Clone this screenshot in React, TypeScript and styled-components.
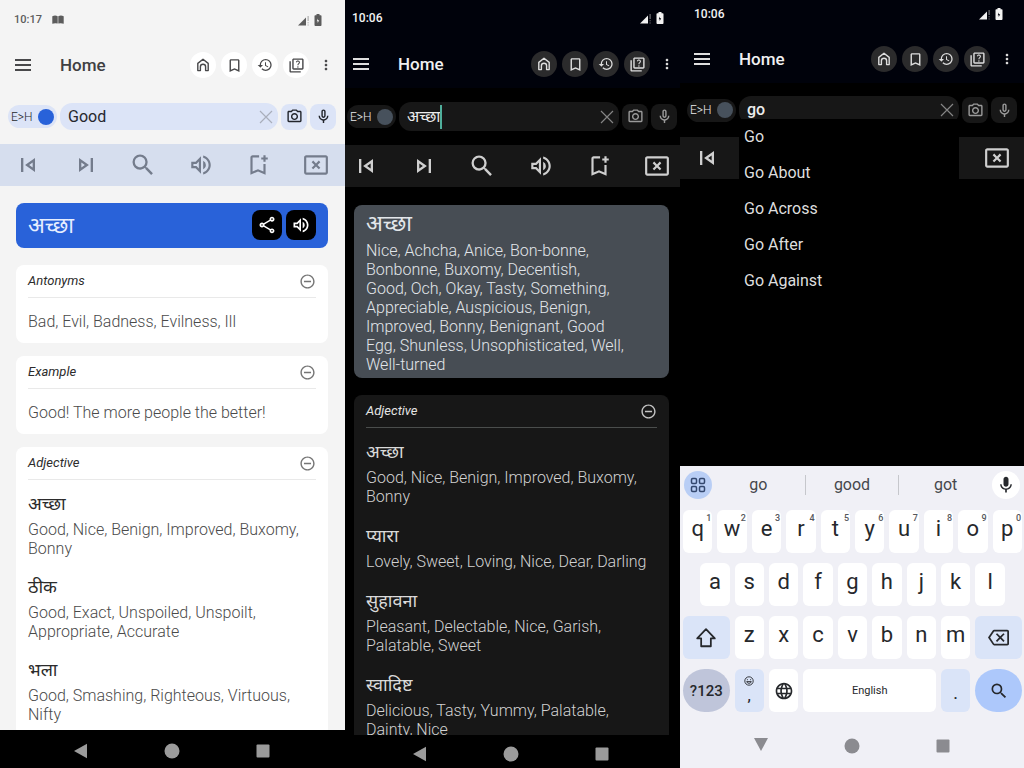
import React, { useState } from 'react';
import styled, { createGlobalStyle, ThemeProvider, css } from 'styled-components';
import {
  MdBookmarkBorder,
  MdHistory,
  MdLanguage,
  MdMic,
  MdMoreVert,
  MdOutlineBackspace,
  MdOutlineBookmarkAdd,
  MdOutlineCancelPresentation,
  MdOutlineMicNone,
  MdOutlinePhotoCamera,
  MdOutlineQuiz,
  MdOutlineShare,
  MdOutlineSkipNext,
  MdOutlineSkipPrevious,
  MdOutlineVolumeUp,
  MdRemoveCircleOutline,
  MdSearch,
} from 'react-icons/md';

type Insets = {
  statusTop: number;
  statusHeight: number;
  statusLeft: number;
  statusRight: number;
  statusSize: number;
  barLeft: number;
  barRight: number;
  searchHeight: number;
  searchLeft: number;
  searchRight: number;
  fieldHeight: number;
  toolLeft: number;
  toolRight: number;
  bodyTop: number;
  bodyLeft: number;
  bodyRight: number;
  entryGap: number;
};

type Palette = {
  page: string;
  bar: string;
  status: string;
  ink: string;
  icon: string;
  chip: string;
  field: string;
  fieldInk: string;
  clear: string;
  knob: string;
  fieldIcon: string;
  tools: string;
  toolIcon: string;
  card: string;
  heading: string;
  word: string;
  text: string;
  rule: string;
  minus: string;
  hero: string;
  heroInk: string;
};

const light: Palette = {
  page: '#f4f4f4',
  bar: '#f4f4f4',
  status: '#5c5c5c',
  ink: '#3f3f42',
  icon: '#48484a',
  chip: '#ffffff',
  field: '#dce4f7',
  fieldInk: '#26282e',
  clear: '#a9aebb',
  knob: '#2862d9',
  fieldIcon: '#22252c',
  tools: '#d6deee',
  toolIcon: '#747c8c',
  card: '#ffffff',
  heading: '#2c2c2c',
  word: '#2b2b2b',
  text: '#4a4a4a',
  rule: '#e9e9e9',
  minus: '#757575',
  hero: '#2962d9',
  heroInk: '#e6eeff',
};

const dark: Palette = {
  page: '#000000',
  bar: '#00020b',
  status: '#f2f2f2',
  ink: '#f0f0f0',
  icon: '#dedede',
  chip: '#2b2b2c',
  field: '#171717',
  fieldInk: '#ececec',
  clear: '#858585',
  knob: '#47515c',
  fieldIcon: '#9a9a9a',
  tools: '#171717',
  toolIcon: '#cfcfcf',
  card: '#171717',
  heading: '#e4e4e4',
  word: '#dadada',
  text: '#d2d2d2',
  rule: '#4a4d4c',
  minus: '#c4c4c4',
  hero: '#474d54',
  heroInk: '#e2e6ea',
};

const lightInsets: Insets = {
  statusTop: 12, statusHeight: 41, statusLeft: 14, statusRight: 23, statusSize: 11,
  barLeft: 13, barRight: 11,
  searchHeight: 55, searchLeft: 8, searchRight: 9, fieldHeight: 27,
  toolLeft: 14, toolRight: 15,
  bodyTop: 17, bodyLeft: 16, bodyRight: 17, entryGap: 16,
};

const darkInsets: Insets = {
  statusTop: 10, statusHeight: 40, statusLeft: 7, statusRight: 16, statusSize: 12,
  barLeft: 6, barRight: 5,
  searchHeight: 57, searchLeft: 2, searchRight: 3, fieldHeight: 29,
  toolLeft: 7, toolRight: 9,
  bodyTop: 18, bodyLeft: 9, bodyRight: 11, entryGap: 17,
};

const typingInsets: Insets = {
  statusTop: 6, statusHeight: 35, statusLeft: 14, statusRight: 21, statusSize: 12,
  barLeft: 12, barRight: 9,
  searchHeight: 54, searchLeft: 7, searchRight: 7, fieldHeight: 28,
  toolLeft: 13, toolRight: 13,
  bodyTop: 18, bodyLeft: 9, bodyRight: 11, entryGap: 17,
};

type PhoneTheme = { c: Palette; s: Insets };
type T = { theme: PhoneTheme };
const c = (key: keyof Palette) => (p: any) => (p as T).theme.c[key];
const s = (key: keyof Insets) => (p: any) => `${(p as T).theme.s[key]}px`;

const GlobalStyle = createGlobalStyle`
  * { box-sizing: border-box; }
  body {
    margin: 0;
    background: #000;
    font-family: Roboto, 'Noto Sans Devanagari', 'Noto Sans', sans-serif;
  }
  button, input { font: inherit; color: inherit; }
  h1, h2, h3, p, ul { margin: 0; padding: 0; }
  svg { display: block; }
`;

const Showcase = styled.main`
  display: grid;
  grid-template-columns: 345fr 335fr 344fr;
  height: 100vh;
`;

const Phone = styled.section`
  display: flex;
  flex-direction: column;
  min-width: 0;
  height: 100vh;
  background: ${c('page')};
`;

const StatusBar = styled.div`
  display: flex;
  align-items: flex-start;
  gap: 10px;
  flex: none;
  height: ${s('statusHeight')};
  padding: ${s('statusTop')} ${s('statusRight')} 0 ${s('statusLeft')};
  background: ${c('bar')};
  color: ${c('status')};
  font-size: ${s('statusSize')};
  font-weight: 500;
  line-height: 16px;
`;

const StatusIcons = styled.span`
  display: flex;
  align-items: center;
  gap: 4px;
  height: 16px;
  margin-left: auto;
`;

const StatusBook = styled.span`
  display: flex;
  align-items: center;
  height: 16px;
`;

const IconButton = styled.button`
  display: flex;
  align-items: center;
  justify-content: center;
  flex: none;
  padding: 0;
  border: 0;
  background: none;
  cursor: pointer;
`;

const AppBar = styled.header`
  display: flex;
  align-items: center;
  flex: none;
  height: 48px;
  padding: 0 ${s('barRight')} 0 ${s('barLeft')};
  background: ${c('bar')};
  color: ${c('icon')};
`;

const Title = styled.h1`
  margin-left: 27px;
  color: ${c('ink')};
  font-size: 17px;
  font-weight: 500;
  line-height: 24px;
`;

const Shortcuts = styled.nav`
  display: flex;
  gap: 5px;
  margin: 0 9px 0 auto;
`;

const Chip = styled(IconButton)`
  width: 26px;
  height: 26px;
  border-radius: 50%;
  background: ${c('chip')};
`;

const MoreButton = styled(IconButton)`
  width: 16px;
`;

const SearchBar = styled.form`
  display: flex;
  align-items: center;
  flex: none;
  gap: 3px;
  height: ${s('searchHeight')};
  padding: 0 ${s('searchRight')} 0 ${s('searchLeft')};
`;

const Direction = styled.label`
  display: flex;
  align-items: center;
  justify-content: space-between;
  flex: none;
  width: 49px;
  height: 23px;
  padding: 0 3px;
  border-radius: 12px;
  background: ${c('field')};
  color: ${c('fieldInk')};
  font-size: 12px;
  font-weight: 300;
`;

const Knob = styled.input`
  appearance: none;
  width: 16px;
  height: 16px;
  margin: 0;
  border-radius: 50%;
  background: ${c('knob')};
`;

const Field = styled.div`
  position: relative;
  display: flex;
  align-items: center;
  flex: 1;
  min-width: 0;
  height: ${s('fieldHeight')};
  padding: 0 3px 0 8px;
  border-radius: 12px;
  background: ${c('field')};
  color: ${c('fieldInk')};
`;

const Query = styled.input<{ $strong?: boolean }>`
  min-width: 8px;
  max-width: 170px;
  height: 24px;
  padding: 0;
  border: 0;
  outline: 0;
  background: none;
  font-size: 16px;
  font-weight: ${(p) => (p.$strong ? 500 : 400)};
  line-height: 24px;
  field-sizing: content;
`;

const Caret = styled.span`
  width: 2px;
  height: 24px;
  background: #4fae9b;
`;

const ClearButton = styled(IconButton)`
  width: 18px;
  height: 24px;
  margin-left: auto;
  color: ${c('clear')};
`;

const FieldButton = styled(IconButton)`
  width: 26px;
  height: 26px;
  border-radius: 8px;
  background: ${c('field')};
  color: ${c('fieldIcon')};
`;

const Suggestions = styled.ul`
  position: absolute;
  top: 23px;
  left: 0;
  right: 0;
  z-index: 2;
  list-style: none;
  background: #000;
`;

const Suggestion = styled.button`
  display: block;
  width: 100%;
  height: 36px;
  padding: 0 5px;
  border: 0;
  background: none;
  color: #dedede;
  font-size: 16px;
  line-height: 36px;
  text-align: left;
`;

const Tools = styled.div`
  display: flex;
  align-items: center;
  justify-content: space-between;
  flex: none;
  height: 42px;
  padding: 0 ${s('toolRight')} 0 ${s('toolLeft')};
  background: ${c('tools')};
  color: ${c('toolIcon')};
`;

const Tool = styled(IconButton)`
  width: 28px;
  height: 28px;
`;

const Results = styled.div`
  display: flex;
  flex-direction: column;
  flex: 1;
  gap: 13px;
  min-height: 0;
  padding: ${s('bodyTop')} ${s('bodyRight')} 0 ${s('bodyLeft')};
  overflow-y: auto;
  scrollbar-width: none;
`;

const Hero = styled.article`
  flex: none;
  margin-bottom: 4px;
  padding: 4px 12px;
  border-radius: 8px;
  background: ${c('hero')};
  color: ${c('heroInk')};
`;

const HeroRow = styled.div`
  display: flex;
  align-items: center;
  gap: 4px;
  min-height: 30px;
`;

const HeroWord = styled.h2`
  flex: 1;
  font-size: 22px;
  font-weight: 400;
  line-height: 30px;
`;

const HeroAction = styled(IconButton)`
  width: 30px;
  height: 30px;
  margin: 3px 0 4px;
  border-radius: 8px;
  background: #000;
  color: #fff;
`;

const Meanings = styled.p`
  color: ${c('text')};
  font-size: 16px;
  font-weight: 300;
  line-height: 19px;
`;

const HeroMeanings = styled(Meanings)`
  padding: 2px 24px 0 0;
  color: ${c('heroInk')};
`;

const Card = styled.article`
  flex: none;
  padding: 0 12px 12px;
  border-radius: 8px;
  background: ${c('card')};
`;

const CardHead = styled.header`
  display: flex;
  align-items: center;
  justify-content: space-between;
  height: 33px;
  border-bottom: 1px solid ${c('rule')};
  color: ${c('minus')};
`;

const CardTitle = styled.h2`
  color: ${c('heading')};
  font-size: 13px;
  font-style: italic;
  font-weight: 400;
  line-height: 20px;
`;

const Note = styled(Meanings)`
  padding-top: 14px;
`;

const Entries = styled.div`
  display: flex;
  flex-direction: column;
  gap: ${s('entryGap')};
  padding-top: 11px;
`;

const Word = styled.h3`
  margin-bottom: 3px;
  color: ${c('word')};
  font-size: 18px;
  font-weight: 400;
  line-height: 26px;
`;

const NavBar = styled.nav<{ $height: number; $offset: number; $pale?: boolean }>`
  display: flex;
  align-items: center;
  gap: 75px;
  flex: none;
  height: ${(p) => p.$height}px;
  padding: ${(p) => (p.$pale ? 12 : 4)}px 0 0 ${(p) => p.$offset}px;
  background: ${(p) => (p.$pale ? 'transparent' : '#000')};
  color: ${(p) => (p.$pale ? '#8b8b90' : '#9b9b9b')};
`;

const Keyboard = styled.div`
  margin-top: auto;
  background: #f0f0f6;
  color: #26282c;
`;

const Predictions = styled.div`
  display: flex;
  align-items: center;
  height: 38px;
  padding: 0 4px;
`;

const RoundKey = styled(IconButton)<{ $tint: string }>`
  width: 28px;
  height: 28px;
  border-radius: 50%;
  background: ${(p) => p.$tint};
`;

const Prediction = styled.button`
  flex: 1;
  height: 20px;
  padding: 0;
  border: 0;
  background: none;
  font-size: 16px;
  line-height: 20px;
  color: #45474c;

  & + & {
    border-left: 1px solid #c6c7cc;
  }
`;

const Words = styled.div`
  display: flex;
  flex: 1;
`;

const Keys = styled.div`
  display: grid;
  grid-template-columns: repeat(20, 1fr);
  grid-auto-rows: 43px;
  row-gap: 10px;
  padding-top: 6px;
`;

const tones = {
  plain: '#ffffff',
  soft: '#dae4f8',
  grey: '#bfc5da',
  blue: '#adc8fb',
};

const Key = styled.button<{
  $span?: number;
  $start?: number;
  $tone?: keyof typeof tones;
  $round?: boolean;
  $small?: boolean;
  $low?: boolean;
}>`
  position: relative;
  display: flex;
  flex-direction: column;
  align-items: center;
  justify-content: ${(p) => (p.$low ? 'flex-end' : 'center')};
  grid-column: ${(p) => p.$start ?? 'auto'} / span ${(p) => p.$span ?? 2};
  margin: 0 2px 0 3px;
  padding: 0;
  border: 0;
  border-radius: ${(p) => (p.$round ? '22px' : '6px')};
  background: ${(p) => tones[p.$tone ?? 'plain']};
  font-size: 22px;
  line-height: 26px;
  ${(p) =>
    p.$small &&
    css`
      font-size: 11px;
      line-height: 14px;
    `}
`;

const LetterKey = styled(Key)`
  padding-bottom: 6px;
`;

const KeyText = styled.span`
  font-size: 15px;
  font-weight: 500;
  line-height: 20px;
`;

const Digit = styled.sup`
  position: absolute;
  top: 2px;
  right: 1px;
  color: #55575c;
  font-size: 9px;
  font-weight: 500;
  line-height: 12px;
`;

const MenuIcon = () => (
  <svg width="20" height="20" viewBox="0 0 20 20" stroke="currentColor" strokeWidth="2" aria-hidden="true">
    <path d="M2 5h16M2 10h16M2 15h16" />
  </svg>
);

const HomeIcon = () => (
  <svg width="16" height="16" viewBox="0 0 16 16" fill="none" stroke="currentColor" strokeWidth="1.4" strokeLinejoin="round" aria-hidden="true">
    <path d="M2.8 13.6V6.4L8 2.2l5.2 4.2v7.2h-2.6V9.8a2.6 2.6 0 0 0-5.2 0v3.8z" />
  </svg>
);

const CloseIcon = () => (
  <svg width="14" height="14" viewBox="0 0 14 14" stroke="currentColor" strokeWidth="1.2" aria-hidden="true">
    <path d="M1 1l12 12M13 1L1 13" />
  </svg>
);

const SignalIcon = () => (
  <svg width="12" height="12" viewBox="0 0 12 12" fill="currentColor" aria-hidden="true">
    <path d="M0 11.5L8 3.5v8z" />
    <path d="M9.6 2h1v5h-1zM9.6 8.2h1v1h-1zM9.6 10.4h1v1h-1z" opacity=".55" />
  </svg>
);

const BatteryIcon = () => (
  <svg width="8" height="12" viewBox="0 0 8 12" aria-hidden="true">
    <path fill="currentColor" fillRule="evenodd" d="M2.5 0h3v1.2h1.2c.6 0 .8.3.8.8v9c0 .6-.3 1-.8 1H1.3c-.5 0-.8-.4-.8-1V2c0-.5.2-.8.8-.8h1.2zM4 4.4L2.700 7.200h1v1.800l1.500-2.800H4z" />
  </svg>
);

const BookIcon = () => (
  <svg width="12" height="10" viewBox="0 0 12 10" fill="currentColor" aria-hidden="true">
    <path d="M.3 1.2Q3.2 0 5.7 1.2V8.6Q3 7.6.3 8.8zM6.300 1.2Q8.8 0 11.7 1.2V8.8Q9 7.6 6.300 8.6z" />
  </svg>
);

const ShiftIcon = () => (
  <svg width="22" height="22" viewBox="0 0 20 20" fill="none" stroke="currentColor" strokeWidth="1.6" strokeLinejoin="round" aria-hidden="true">
    <path d="M10 2L2 10.4h3.6v7.1h8.8v-7.1H18z" />
  </svg>
);

const GridIcon = () => (
  <svg width="16" height="16" viewBox="0 0 16 16" fill="none" stroke="#34486f" strokeWidth="1.5" aria-hidden="true">
    <rect x="1.5" y="1.5" width="5" height="5" rx="1.2" />
    <rect x="9.5" y="1.5" width="5" height="5" rx="1.2" />
    <rect x="1.5" y="9.5" width="5" height="5" rx="1.2" />
    <rect x="9.5" y="9.5" width="5" height="5" rx="1.2" />
  </svg>
);

const SmileIcon = () => (
  <svg width="10" height="10" viewBox="0 0 10 10" fill="none" stroke="currentColor" strokeWidth="0.9" aria-hidden="true">
    <circle cx="5" cy="5" r="4.2" />
    <path d="M2.7 5.6a2.4 2.4 0 0 0 4.6 0zM3.4 3.2v1M6.6 3.2v1" />
  </svg>
);

const BackIcon = ({ down }: { down?: boolean }) => (
  <svg width="16" height="16" viewBox="0 0 16 16" fill="currentColor" aria-hidden="true">
    {down ? <path d="M1 0h14L8 13z" /> : <path d="M14 .8v14.400L1 8z" />}
  </svg>
);

const CircleIcon = () => (
  <svg width="16" height="16" viewBox="0 0 16 16" fill="currentColor" aria-hidden="true">
    <circle cx="8" cy="8" r="7.5" />
  </svg>
);

const SquareIcon = () => (
  <svg width="16" height="16" viewBox="0 0 16 16" fill="currentColor" aria-hidden="true">
    <rect x="1.5" y="1.5" width="13" height="13" rx="1" />
  </svg>
);

const SystemNav = ({ height, offset, pale }: { height: number; offset: number; pale?: boolean }) => (
  <NavBar $height={height} $offset={offset} $pale={pale} aria-label="System">
    <IconButton aria-label="Back"><BackIcon down={pale} /></IconButton>
    <IconButton aria-label="Home screen"><CircleIcon /></IconButton>
    <IconButton aria-label="Recent apps"><SquareIcon /></IconButton>
  </NavBar>
);

type TopProps = { time: string; book?: boolean; query: string; caret?: boolean; suggestions?: string[] };

const Top = ({ time, book, query, caret, suggestions }: TopProps) => {
  const [text, setText] = useState(query);
  return (
    <>
      <StatusBar>
        <span>{time}</span>
        {book && <StatusBook><BookIcon /></StatusBook>}
        <StatusIcons><SignalIcon /><BatteryIcon /></StatusIcons>
      </StatusBar>
      <AppBar>
        <IconButton aria-label="Menu"><MenuIcon /></IconButton>
        <Title>Home</Title>
        <Shortcuts aria-label="Shortcuts">
          <Chip aria-label="Home"><HomeIcon /></Chip>
          <Chip aria-label="Bookmarks"><MdBookmarkBorder size={17} /></Chip>
          <Chip aria-label="History"><MdHistory size={16} /></Chip>
          <Chip aria-label="Quiz"><MdOutlineQuiz size={17} /></Chip>
        </Shortcuts>
        <MoreButton aria-label="More"><MdMoreVert size={22} /></MoreButton>
      </AppBar>
      <SearchBar onSubmit={(e) => e.preventDefault()}>
        <Direction>
          E&gt;H
          <Knob type="checkbox" defaultChecked />
        </Direction>
        <Field>
          <Query aria-label="Search word" $strong={!!suggestions} value={text} onChange={(e) => setText(e.target.value)} />
          {caret && <Caret />}
          <ClearButton type="button" aria-label="Clear" onClick={() => setText('')}><CloseIcon /></ClearButton>
          {suggestions && (
            <Suggestions>
              {suggestions.map((item) => (
                <li key={item}>
                  <Suggestion type="button" onClick={() => setText(item)}>{item}</Suggestion>
                </li>
              ))}
            </Suggestions>
          )}
        </Field>
        <FieldButton type="button" aria-label="Camera"><MdOutlinePhotoCamera size={17} /></FieldButton>
        <FieldButton type="button" aria-label="Voice"><MdOutlineMicNone size={17} /></FieldButton>
      </SearchBar>
      <Tools role="toolbar">
        <Tool aria-label="Previous"><MdOutlineSkipPrevious size={28} /></Tool>
        <Tool aria-label="Next"><MdOutlineSkipNext size={28} /></Tool>
        <Tool aria-label="Search"><MdSearch size={28} /></Tool>
        <Tool aria-label="Speak"><MdOutlineVolumeUp size={26} /></Tool>
        <Tool aria-label="Add bookmark"><MdOutlineBookmarkAdd size={26} /></Tool>
        <Tool aria-label="Close"><MdOutlineCancelPresentation size={26} /></Tool>
      </Tools>
    </>
  );
};

const Panel = ({ title, children }: { title: string; children: React.ReactNode }) => (
  <Card>
    <CardHead>
      <CardTitle>{title}</CardTitle>
      <IconButton aria-label={`Collapse ${title}`}><MdRemoveCircleOutline size={17} /></IconButton>
    </CardHead>
    {children}
  </Card>
);

const WordList = ({ items }: { items: [string, string][] }) => (
  <Entries>
    {items.map(([word, meanings]) => (
      <div key={word}>
        <Word lang="hi">{word}</Word>
        <Meanings>{meanings}</Meanings>
      </div>
    ))}
  </Entries>
);

const lightEntries: [string, string][] = [
  ['अच्छा', 'Good, Nice, Benign, Improved, Buxomy, Bonny'],
  ['ठीक', 'Good, Exact, Unspoiled, Unspoilt, Appropriate, Accurate'],
  ['भला', 'Good, Smashing, Righteous, Virtuous, Nifty'],
];

const darkEntries: [string, string][] = [
  ['अच्छा', 'Good, Nice, Benign, Improved, Buxomy, Bonny'],
  ['प्यारा', 'Lovely, Sweet, Loving, Nice, Dear, Darling'],
  ['सुहावना', 'Pleasant, Delectable, Nice, Garish, Palatable, Sweet'],
  ['स्वादिष्ट', 'Delicious, Tasty, Yummy, Palatable, Dainty, Nice'],
];

const digits = '1234567890';

export default function App() {
  return (
    <>
      <GlobalStyle />
      <Showcase>
        <ThemeProvider theme={{ c: light, s: lightInsets }}>
          <Phone>
            <Top time="10:17" book query="Good" />
            <Results>
              <Hero>
                <HeroRow>
                  <HeroWord lang="hi">अच्छा</HeroWord>
                  <HeroAction aria-label="Share"><MdOutlineShare size={20} /></HeroAction>
                  <HeroAction aria-label="Speak"><MdOutlineVolumeUp size={20} /></HeroAction>
                </HeroRow>
              </Hero>
              <Panel title="Antonyms"><Note>Bad, Evil, Badness, Evilness, Ill</Note></Panel>
              <Panel title="Example"><Note>Good! The more people the better!</Note></Panel>
              <Panel title="Adjective"><WordList items={lightEntries} /></Panel>
            </Results>
            <SystemNav height={38} offset={73} />
          </Phone>
        </ThemeProvider>

        <ThemeProvider theme={{ c: dark, s: darkInsets }}>
          <Phone>
            <Top time="10:06" query="अच्छा" caret />
            <Results>
              <Hero>
                <HeroRow><HeroWord lang="hi">अच्छा</HeroWord></HeroRow>
                <HeroMeanings>
                  Nice, Achcha, Anice, Bon-bonne, Bonbonne, Buxomy, Decentish,
                  <br />
                  Good, Och, Okay, Tasty, Something, Appreciable, Auspicious, Benign, Improved, Bonny, Benignant,
                  Good Egg, Shunless, Unsophisticated, Well, Well-turned
                </HeroMeanings>
              </Hero>
              <Panel title="Adjective"><WordList items={darkEntries} /></Panel>
            </Results>
            <SystemNav height={33} offset={67} />
          </Phone>
        </ThemeProvider>

        <ThemeProvider theme={{ c: dark, s: typingInsets }}>
          <Phone>
            <Top time="10:06" query="go" suggestions={['Go', 'Go About', 'Go Across', 'Go After', 'Go Against']} />
            <Keyboard>
              <Predictions>
                <RoundKey $tint="#b9cef5" aria-label="Keyboard menu"><GridIcon /></RoundKey>
                <Words>
                  <Prediction>go</Prediction>
                  <Prediction>good</Prediction>
                  <Prediction>got</Prediction>
                </Words>
                <RoundKey $tint="#ffffff" aria-label="Voice typing"><MdMic size={20} /></RoundKey>
              </Predictions>
              <Keys>
                {'qwertyuiop'.split('').map((k, i) => (
                  <LetterKey key={k}>{k}<Digit>{digits[i]}</Digit></LetterKey>
                ))}
                {'asdfghjkl'.split('').map((k, i) => (
                  <LetterKey key={k} $start={i === 0 ? 2 : undefined}>{k}</LetterKey>
                ))}
                <Key $start={1} $span={3} $tone="soft" aria-label="Shift"><ShiftIcon /></Key>
                {'zxcvbnm'.split('').map((k) => (
                  <LetterKey key={k}>{k}</LetterKey>
                ))}
                <Key $span={3} $tone="soft" aria-label="Backspace"><MdOutlineBackspace size={21} /></Key>
                <Key $span={3} $tone="grey" $round><KeyText>?123</KeyText></Key>
                <Key $tone="soft"><SmileIcon /><KeyText>,</KeyText></Key>
                <Key aria-label="Language"><MdLanguage size={20} /></Key>
                <Key $span={8} $small>English</Key>
                <Key $tone="soft" $low><LowDot>.</LowDot></Key>
                <Key $span={3} $tone="blue" $round aria-label="Search"><MdSearch size={20} /></Key>
              </Keys>
              <SystemNav height={56} offset={73} pale />
            </Keyboard>
          </Phone>
        </ThemeProvider>
      </Showcase>
    </>
  );
}

const LowDot = styled(KeyText)`
  padding-bottom: 8px;
`;
